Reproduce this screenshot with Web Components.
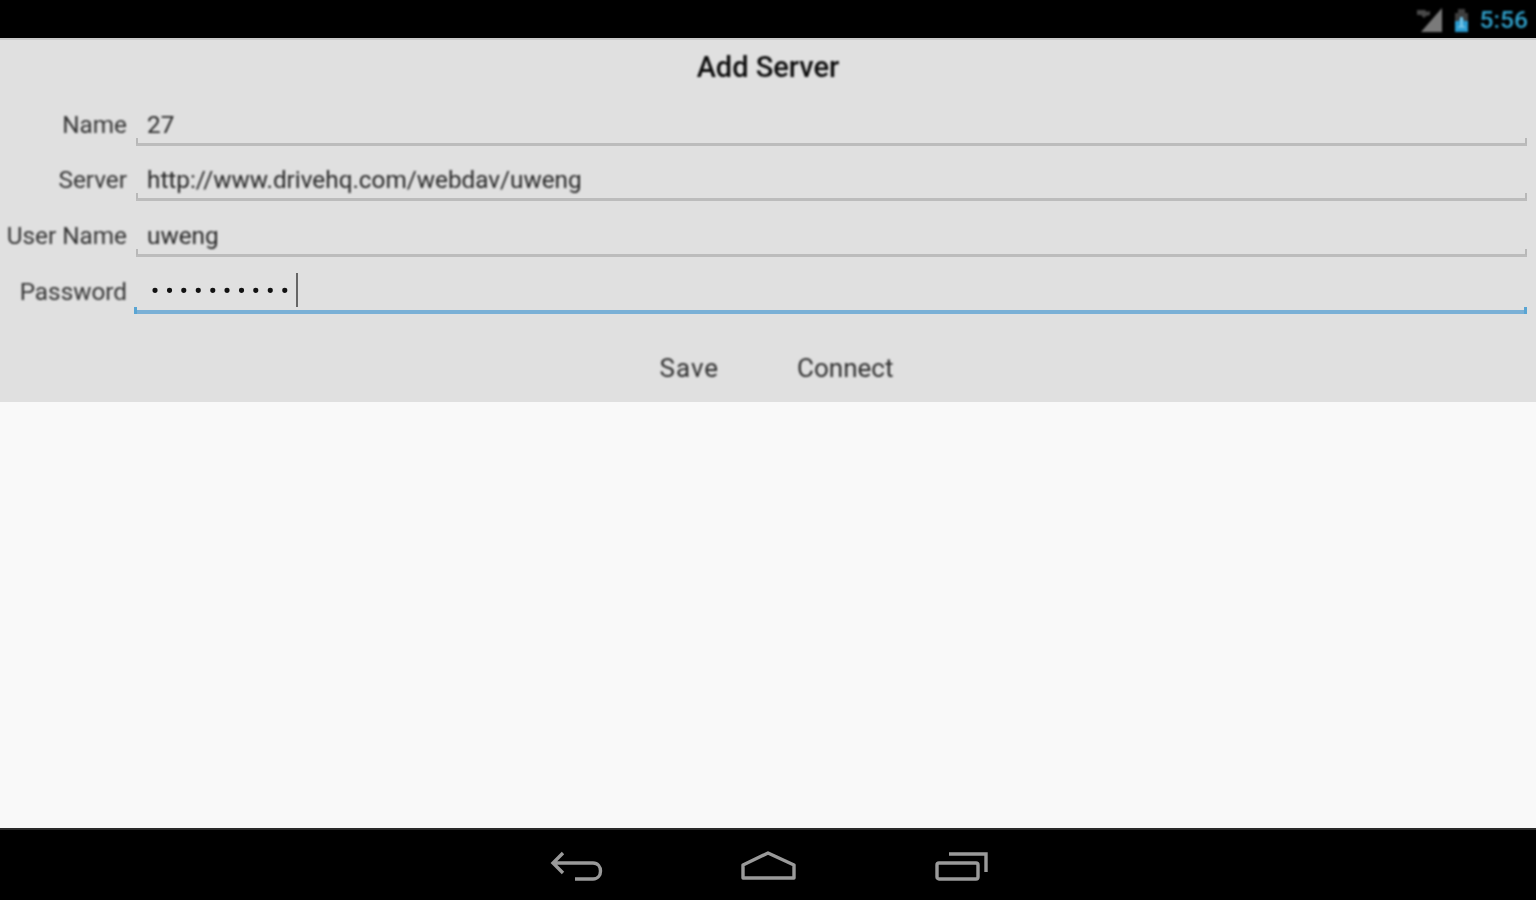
<!DOCTYPE html>
<html>
<head>
<meta charset="utf-8">
<title>Add Server</title>
<style>
    html, body { margin: 0; height: 100%; }
    body { font-family: Roboto, "Liberation Sans", sans-serif; background: #f9f9f9; }
    #screen { display: flex; flex-direction: column; height: 900px; overflow: hidden; }
    #filler { flex: 1; background: #f9f9f9; }
</style>
</head>
<body>
<div id="screen">
    <status-bar time="5:56"></status-bar>
    <server-form heading="Add Server">
        <form-row label="Name" value="27"></form-row>
        <form-row label="Server" value="http://www.drivehq.com/webdav/uweng"></form-row>
        <form-row label="User Name" value="uweng"></form-row>
        <form-row label="Password" value="••••••••••" focused></form-row>
        <text-button slot="actions" style="letter-spacing:1px">Save</text-button>
        <text-button slot="actions">Connect</text-button>
    </server-form>
    <div id="filler"></div>
    <nav-bar></nav-bar>
</div>

<script>
class StatusBar extends HTMLElement {
    constructor() {
        super()
        this.attachShadow({ mode: 'open' })
        this.shadowRoot.innerHTML = `
            <style>
                :host {
                    display: flex;
                    justify-content: flex-end;
                    align-items: center;
                    gap: 9px;
                    height: 38px;
                    padding: 2px 8px 0 0;
                    box-sizing: border-box;
                    background: #000;
                }
                svg { display: block; filter: blur(1px); }
                svg + svg { margin-right: 1px; }
                #time { color: #2f9fc9; font-size: 24.6px; line-height: 36px; font-weight: 500; filter: blur(.9px); }
            </style>
            <svg width="28" height="26" viewBox="0 0 28 26">
                <path d="M26 1V25H5Z" fill="#7a7a7a"/>
                <path d="M1 3h8l2 2 3-1v4l-4 1-2 2-3-3H1z" fill="#484848"/>
            </svg>
            <svg width="17" height="24" viewBox="0 0 17 24">
                <path d="M5 1h7v4h3v8H2V5h3z" fill="#3e3e3e"/>
                <path d="M2 13h4l1-3h3l1 3h4v11H2z" fill="#2a9bd0"/>
                <path d="M7 9h3v8l3 3H4l3-3z" fill="#6fc0e4"/>
            </svg>
            <span id="time"></span>
        `
        this.shadowRoot.querySelector('#time').textContent = this.getAttribute('time')
    }
}

class ServerForm extends HTMLElement {
    constructor() {
        super()
        this.attachShadow({ mode: 'open' })
        this.shadowRoot.innerHTML = `
            <style>
                :host {
                    display: block;
                    height: 364px;
                    box-sizing: border-box;
                    background: #e0e0e0;
                    border-top: 2px solid #c9c9c9;
                }
                h1 {
                    margin: 0;
                    height: 55px;
                    font-size: 29px;
                    line-height: 54px;
                    font-weight: 500;
                    text-align: center;
                    color: #0c0c0c;
                    filter: blur(.8px);
                }
                #rows { display: grid; grid-auto-rows: 55.7px; margin-top: -5px; }
                #actions { display: flex; justify-content: center; gap: 78px; margin-top: 35px; padding-left: 17px; }
            </style>
            <h1></h1>
            <div id="rows"><slot></slot></div>
            <div id="actions"><slot name="actions"></slot></div>
        `
        this.shadowRoot.querySelector('h1').textContent = this.getAttribute('heading')
    }
}

class FormRow extends HTMLElement {
    constructor() {
        super()
        this.attachShadow({ mode: 'open' })
        this.shadowRoot.innerHTML = `
            <style>
                :host {
                    display: grid;
                    grid-template-columns: 127px 1fr;
                    column-gap: 9px;
                    padding-right: 9px;
                    font-size: 24.3px;
                    color: #333;
                }
                #label {
                    text-align: right;
                    padding-top: 17.5px;
                    line-height: 34px;
                    white-space: nowrap;
                    filter: blur(.8px);
                }
                #field {
                    position: relative;
                    box-sizing: border-box;
                    height: 55.7px;
                    padding: 17.5px 0 0 11px;
                    line-height: 34px;
                    color: #262626;
                    border-bottom: 3px solid #bcbcbc;
                }
                #field::before, #field::after {
                    content: "";
                    position: absolute;
                    bottom: -1px;
                    width: 2px;
                    height: 6px;
                    background: #b8b8b8;
                }
                #field::before { left: 0; }
                #field::after { right: 0; }
                #text { filter: blur(.8px); display: inline-block; white-space: nowrap; }
                :host([focused]) #field {
                    height: 57.2px;
                    margin-left: -2px;
                    border-bottom: 4px solid #7ab0d6;
                }
                :host([focused]) #field::before, :host([focused]) #field::after { background: #5aa5d3; height: 7px; bottom: -4px; width: 3px; }
                #caret { display: none; position: absolute; left: 162px; top: 16px; width: 2px; height: 34px; background: #666; filter: blur(.4px); }
                :host([focused]) #caret { display: block; }
                :host([focused]) #text {
                    position: relative;
                    top: -2px;
                    margin-left: 6px;
                    font-size: 22px;
                    font-weight: 700;
                    letter-spacing: 6.5px;
                    color: #111;
                    filter: blur(.6px);
                }
            </style>
            <div id="label"></div>
            <div id="field"><span id="text"></span><span id="caret"></span></div>
        `
        this.shadowRoot.querySelector('#label').textContent = this.getAttribute('label')
        this.shadowRoot.querySelector('#text').textContent = this.getAttribute('value')
    }
}

class TextButton extends HTMLElement {
    constructor() {
        super()
        this.attachShadow({ mode: 'open' })
        this.shadowRoot.innerHTML = `
            <style>
                :host {
                    display: block;
                    font-size: 26px;
                    line-height: 40px;
                    color: #2e2e2e;
                    filter: blur(.8px);
                }
            </style>
            <slot></slot>
        `
    }
}

class NavBar extends HTMLElement {
    constructor() {
        super()
        this.attachShadow({ mode: 'open' })
        this.shadowRoot.innerHTML = `
            <style>
                :host {
                    display: flex;
                    justify-content: center;
                    align-items: flex-start;
                    gap: 134px;
                    height: 72px;
                    box-sizing: border-box;
                    padding-top: 21px;
                    background: #000;
                    border-top: 2px solid #2a2a2a;
                }
                svg { display: block; fill: none; stroke: #9a9a9a; stroke-width: 3.4; filter: blur(.7px); }
            </style>
            <svg width="60" height="32" viewBox="0 0 60 32">
                <path d="M19 2L9 12L19 22M9 12H49C59 12 59 28 49 28H31"/>
            </svg>
            <svg width="60" height="32" viewBox="0 0 60 32">
                <path d="M5 27V14L30 2L56 14V27Z" stroke-linejoin="round"/>
            </svg>
            <svg width="60" height="32" viewBox="0 0 60 32">
                <rect x="5" y="12" width="41" height="16" rx="2"/>
                <path d="M17 3H54V21"/>
            </svg>
        `
    }
}

customElements.define('status-bar', StatusBar)
customElements.define('server-form', ServerForm)
customElements.define('form-row', FormRow)
customElements.define('text-button', TextButton)
customElements.define('nav-bar', NavBar)
</script>
</body>
</html>
